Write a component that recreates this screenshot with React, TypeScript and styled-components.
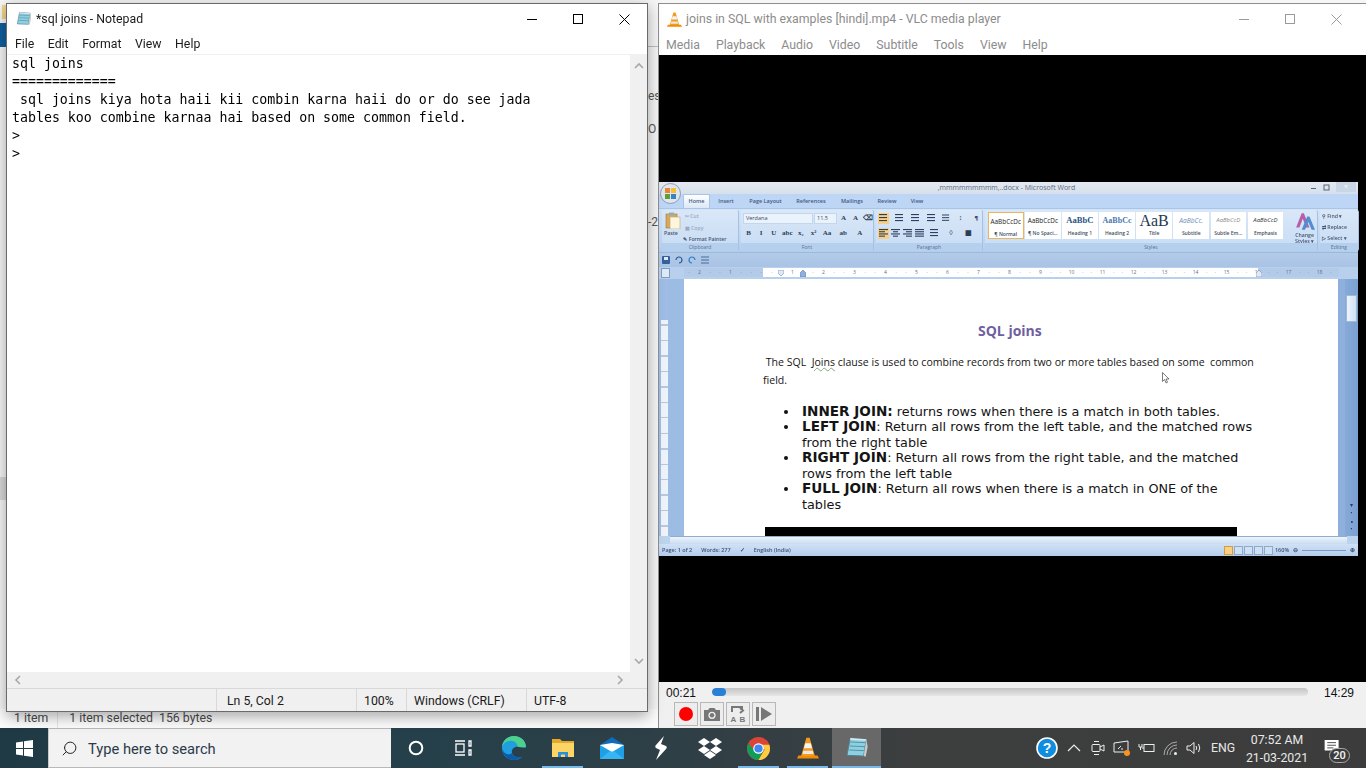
import React from 'react'
import styled, { createGlobalStyle, css } from 'styled-components'
import { Search } from 'lucide-react'

const Global = createGlobalStyle`
  html, body { margin: 0; padding: 0; overflow: hidden; background: #fff; }
  * { box-sizing: border-box; }
`

const UI = `Roboto, "Open Sans", sans-serif`

const Desktop = styled.div`
  width: 1366px;
  height: 768px;
  display: flex;
  flex-direction: column;
  font-family: ${UI};
  overflow: hidden;
`
const Workspace = styled.div`
  position: relative;
  flex: 1;
  background: #f6f6f6;
`
const Scrap = styled.div<{ $x: number; $y: number; $w: number; $h: number; $bg: string }>`
  position: absolute;
  left: ${p => p.$x}px;
  top: ${p => p.$y}px;
  width: ${p => p.$w}px;
  height: ${p => p.$h}px;
  background: ${p => p.$bg};
  font-size: 12px;
  color: #555;
  line-height: ${p => p.$h}px;
  white-space: nowrap;
`
const ExplorerStatus = styled.div`
  position: absolute;
  left: 0;
  top: 709px;
  width: 658px;
  height: 19px;
  padding: 1px 0 0 14px;
  background: #fbfbfb;
  display: flex;
  gap: 9px;
  font-size: 12.3px;
  line-height: 16px;
  color: #4a4a4a;
  span + span { border-left: 1px solid #e4e4e4; padding-left: 11px; }
`
const Win = styled.div<{ $x: number; $y: number; $w: number; $h: number }>`
  position: absolute;
  left: ${p => p.$x}px;
  top: ${p => p.$y}px;
  width: ${p => p.$w}px;
  height: ${p => p.$h}px;
  display: flex;
  flex-direction: column;
  background: #fff;
`
const NotepadWin = styled(Win)`
  border: 1px solid #6a6a6a;
  box-shadow: 0 4px 14px rgba(0, 0, 0, 0.35);
`
const VlcWin = styled(Win)`
  border-left: 1px solid #8f8f8f;
  border-top: 1px solid #8f8f8f;
`
const TitleBar = styled.div<{ $dim?: boolean; $pad: number; $right: number }>`
  height: 30px;
  flex: none;
  display: flex;
  align-items: center;
  padding: 0 ${p => p.$right}px 0 ${p => p.$pad}px;
  gap: 4px;
  font-size: 12.3px;
  color: ${p => (p.$dim ? '#8c8c8c' : '#1a1a1a')};
  white-space: nowrap;
`
const Grow = styled.div`
  flex: 1;
`
const CaptionGroup = styled.div`
  display: flex;
  flex: none;
`
const CaptionBtn = styled.div`
  width: 46px;
  height: 28px;
  display: flex;
  align-items: center;
  justify-content: center;
`
const MenuBar = styled.div<{ $dim?: boolean; $gap: number; $top: number; $pad: number }>`
  height: 20px;
  margin-top: ${p => p.$top}px;
  flex: none;
  display: flex;
  align-items: center;
  gap: ${p => p.$gap}px;
  padding-left: ${p => p.$pad}px;
  font-size: 12.3px;
  color: ${p => (p.$dim ? '#8c8c8c' : '#1a1a1a')};
`
const EditRow = styled.div`
  flex: 1;
  display: flex;
  min-height: 0;
  border-top: 1px solid #f0f0f0;
`
const EditText = styled.pre`
  flex: 1;
  margin: 0;
  padding: 0 0 0 5px;
  font-family: "DejaVu Sans Mono", "Liberation Mono", monospace;
  font-size: 13.25px;
  line-height: 18px;
  color: #000;
`
const VScroll = styled.div`
  width: 17px;
  flex: none;
  background: #f0f0f0;
  display: flex;
  flex-direction: column;
  justify-content: space-between;
  align-items: center;
  padding: 6px 0;
`
const HScroll = styled.div`
  height: 16px;
  flex: none;
  background: #f0f0f0;
  display: flex;
  justify-content: space-between;
  align-items: center;
  padding: 0 22px 0 6px;
`
const StatusBar = styled.div`
  height: 23px;
  flex: none;
  display: flex;
  background: #f0f0f0;
  border-top: 1px solid #d9d9d9;
  font-size: 12.3px;
  color: #1a1a1a;
`
const StatusCell = styled.div<{ $w?: number; $pad?: number; $last?: boolean }>`
  ${p => (p.$w ? css`width: ${p.$w}px;` : css`flex: 1;`)}
  flex-shrink: 0;
  padding-left: ${p => p.$pad ?? 7}px;
  line-height: 25px;
  border-right: ${p => (p.$last ? 'none' : '1px solid #d9d9d9')};
  white-space: nowrap;
`
const Video = styled.div`
  flex: none;
  height: 627px;
  background: #000;
  padding-top: 127px;
`
const Controls = styled.div`
  flex: 1;
  background: #f0f0f0;
  padding-left: 7px;
  display: flex;
  flex-direction: column;
`
const SeekRow = styled.div`
  height: 19px;
  margin-bottom: 1px;
  display: flex;
  align-items: center;
  font-family: "Liberation Sans", sans-serif;
  font-size: 12px;
  color: #111;
`
const SeekTime = styled.div<{ $w?: number }>`
  width: ${p => p.$w ?? 46}px;
  flex: none;
  padding-top: 2px;
`
const Seek = styled.div`
  width: 596px;
  height: 8px;
  margin-right: 16px;
  flex: none;
  border-radius: 4px;
  background: linear-gradient(#c4c4c4, #e6e6e6);
  overflow: hidden;
`
const SeekFill = styled.div<{ $w: number }>`
  width: ${p => p.$w}px;
  height: 100%;
  border-radius: 4px;
  background: #2a7fd6;
`
const ButtonRow = styled.div`
  display: flex;
  gap: 2px;
  margin-left: 8px;
`
const CtlBtn = styled.div`
  width: 24px;
  height: 24px;
  border: 1px solid #b8b8b8;
  display: flex;
  align-items: center;
  justify-content: center;
  background: #ededed;
`

/* word screen-recording inside the video */
const Word = styled.div`
  width: 699px;
  height: 374px;
  display: flex;
  flex-direction: column;
  background: #bcd3ee;
  filter: blur(0.35px);
  position: relative;
  font-family: "Open Sans", sans-serif;
  color: #3a4f6c;
`
const WordTitle = styled.div`
  height: 12px;
  flex: none;
  background: linear-gradient(#e4e9f0, #d6e0ec);
  font-size: 7px;
  line-height: 12px;
  color: #5d6b80;
  text-align: center;
  padding-right: 4px;
  position: relative;
`
const WordCaption = styled.div`
  position: absolute;
  right: 2px;
  top: 0;
  height: 10px;
  display: flex;
  align-items: center;
  gap: 6px;
`
const WordClose = styled.div`
  width: 20px;
  height: 10px;
  background: #c9d6e6;
  color: #fff;
  font-size: 7px;
  line-height: 10px;
  text-align: center;
`
const Orb = styled.div`
  position: absolute;
  left: 1px;
  top: 1px;
  z-index: 2;
`
const TabRow = styled.div`
  height: 14px;
  flex: none;
  display: flex;
  padding-left: 24px;
  font-size: 5.5px;
  font-weight: 600;
  line-height: 14px;
  background: #bdd6f5;
  color: #3f5a80;
  white-space: nowrap;
`
const WTab = styled.div<{ $w: number; $on?: boolean }>`
  width: ${p => p.$w}px;
  text-align: center;
  ${p => p.$on && css`
    background: linear-gradient(#fff, #dbe8f8);
    border: 1px solid #a8c3e3;
    border-bottom: none;
    border-radius: 2px 2px 0 0;
    line-height: 12px;
  `}
`
const Ribbon = styled.div`
  height: 44px;
  flex: none;
  display: flex;
  gap: 2px;
  padding: 1px 1px 1px 3px;
  background: linear-gradient(#d4e4f7, #bfd7f3 70%, #b2cdee);
  border-top: 1px solid #a9c5e6;
`
const Group = styled.div<{ $w: number }>`
  width: ${p => p.$w}px;
  flex: none;
  display: flex;
  flex-direction: column;
  border-right: 1px solid #a5c0e0;
  border-radius: 2px;
  background: linear-gradient(#d9e7f8, #c8dcf4);
`
const GroupBody = styled.div`
  flex: 1;
  display: flex;
  min-height: 0;
  padding: 2px 2px 0;
`
const GroupLabel = styled.div`
  height: 8px;
  flex: none;
  background: #b5cfee;
  font-size: 5px;
  line-height: 8px;
  text-align: center;
  color: #55708f;
`
const ToolCol = styled.div<{ $gap?: number }>`
  display: flex;
  flex-direction: column;
  gap: ${p => p.$gap ?? 3}px;
`
const ToolRow = styled.div<{ $gap?: number }>`
  display: flex;
  align-items: center;
  height: 12px;
  gap: ${p => p.$gap ?? 2}px;
`
const Mini = styled.div`
  font-size: 5.2px;
  font-weight: 600;
  line-height: 8px;
  white-space: nowrap;
  color: #45556e;
`
const MiniDim = styled(Mini)`
  color: #9aa9bc;
`
const Combo = styled.div<{ $w: number }>`
  width: ${p => p.$w}px;
  height: 11px;
  background: #eaf2fc;
  border: 1px solid #c2d6ee;
  font-size: 5.5px;
  line-height: 9px;
  padding-left: 2px;
  color: #3a4a60;
`
const Glyph = styled.div<{ $w?: number; $on?: boolean }>`
  width: ${p => p.$w ?? 11}px;
  height: 11px;
  flex: none;
  text-align: center;
  font-family: "Liberation Serif", serif;
  font-size: 7px;
  font-weight: 700;
  line-height: 11px;
  color: #2d3c55;
  background: ${p => (p.$on ? '#f8cf84' : 'transparent')};
  display: flex;
  align-items: center;
  justify-content: center;
`
const StyleStrip = styled.div`
  display: flex;
  gap: 1.6px;
  padding-left: 1px;
`
const StyleTile = styled.div<{ $on?: boolean }>`
  width: 35.5px;
  height: 27px;
  background: #fff;
  flex: none;
  text-align: center;
  overflow: hidden;
  ${p => p.$on && css`border: 1px solid #eeb45a;`}
`
const Preview = styled.div<{ $c: string; $f?: string; $s: number; $b?: boolean; $i?: boolean }>`
  height: 17px;
  line-height: 17px;
  font-size: ${p => p.$s}px;
  color: ${p => p.$c};
  font-family: ${p => p.$f ?? '"Open Sans", sans-serif'};
  font-weight: ${p => (p.$b ? 700 : 400)};
  font-style: ${p => (p.$i ? 'italic' : 'normal')};
  white-space: nowrap;
`
const TileName = styled.div`
  font-size: 5px;
  font-weight: 600;
  line-height: 8px;
  color: #3e4d62;
  white-space: nowrap;
`
const ChangeStyles = styled.div`
  margin-left: 11px;
  width: 24px;
  text-align: center;
  font-size: 5.2px;
  line-height: 6px;
  font-weight: 600;
  color: #45556e;
`
const Qat = styled.div`
  height: 15px;
  flex: none;
  display: flex;
  align-items: center;
  gap: 5px;
  padding-left: 3px;
  background: linear-gradient(#b3cbe9, #a9c3e5);
  border-top: 1px solid #9db8da;
`
const RulerRow = styled.div`
  height: 12px;
  flex: none;
  display: flex;
  background: #b8d0ee;
`
const RulerCorner = styled.div`
  width: 9px;
  height: 10px;
  margin: 1px 0 0 2px;
  background: #dfe9f6;
  border: 1px solid #7d9cc4;
  flex: none;
`
const Ruler = styled.div`
  margin-left: 14px;
  width: 655px;
  height: 9px;
  margin-top: 1px;
  display: flex;
  position: relative;
  background: linear-gradient(90deg, #b3cbe9 0 79px, #fff 79px 574px, #b3cbe9 574px);
`
const RulerCell = styled.div`
  width: 31px;
  flex: none;
  display: flex;
  justify-content: space-around;
  font-size: 5px;
  line-height: 9px;
  color: #5a6f8d;
`
const RulerMark = styled.svg<{ $x: number }>`
  position: absolute;
  left: ${p => p.$x}px;
  top: 2px;
`
const DocArea = styled.div`
  flex: 1;
  display: flex;
  min-height: 0;
  background: linear-gradient(90deg, #9cbce4, #8fb0dc);
`
const VRuler = styled.div`
  width: 7px;
  margin-left: 2px;
  flex: none;
  background:
    linear-gradient(#9fbde4 0 41px, transparent 41px),
    repeating-linear-gradient(#eef3fa 0 14px, #b9c7da 14px 15.5px);
`
const Page = styled.div`
  margin-left: 16px;
  width: 654px;
  flex: none;
  background: #fff;
  overflow: hidden;
  padding-top: 42px;
  color: #111;
  position: relative;
  font-family: "DejaVu Sans", Verdana, sans-serif;
`
const DocTitle = styled.div`
  margin-left: 294px;
  font-family: "Open Sans", sans-serif;
  font-weight: 700;
  font-size: 14px;
  line-height: 20px;
  color: #6f5f9f;
  white-space: nowrap;
`
const DocPara = styled.div`
  margin: 12px 0 0 79px;
  font-family: "Open Sans", sans-serif;
  font-size: 10.55px;
  line-height: 18px;
  white-space: pre;
  color: #151515;
  u { text-decoration: underline wavy #7fa87f 1px; }
`
const DocList = styled.ul`
  margin: 15px 0 0 118px;
  padding: 0;
  list-style: none;
  font-size: 12.8px;
  line-height: 15.45px;
  white-space: nowrap;
  color: #141414;
  b { font-size: 13.6px; }
  li { position: relative; }
  li::before {
    content: '';
    position: absolute;
    left: -18px;
    top: 6px;
    width: 4px;
    height: 4px;
    border-radius: 50%;
    background: #111;
  }
`
const BlackBar = styled.div`
  margin: 15px 0 0 81px;
  width: 472px;
  height: 12px;
  background: #000;
`
const WordV = styled.div`
  margin-left: 7px;
  flex: 1;
  background: linear-gradient(90deg, #86a9d8, #7ba0d2);
  display: flex;
  flex-direction: column;
`
const WordThumb = styled.div`
  height: 27px;
  margin: 16px 1px 0;
  background: linear-gradient(90deg, #eef4fc, #cfe0f4);
  border: 1px solid #9eb8d8;
`
const WordArrows = styled.div`
  margin-top: auto;
  padding-bottom: 3px;
  font-size: 6px;
  line-height: 8px;
  text-align: center;
  color: #27405f;
`
const WordH = styled.div`
  height: 8px;
  flex: none;
  margin: 0 11px;
  background: linear-gradient(#eef4fb, #c9dbf1);
  border-top: 1px solid #8fadd3;
`
const WordStatus = styled.div`
  height: 12px;
  flex: none;
  display: flex;
  align-items: center;
  gap: 9px;
  padding: 0 3px;
  font-size: 5.5px;
  font-weight: 600;
  color: #3c5273;
  background: linear-gradient(#d0e1f6, #b4cdec);
  white-space: nowrap;
`
const ViewBtns = styled.div`
  margin-left: auto;
  display: flex;
  align-items: center;
  gap: 1px;
`
const ViewBtn = styled.div<{ $on?: boolean }>`
  width: 9px;
  height: 9px;
  border: 1px solid ${p => (p.$on ? '#d99a3c' : '#8fa9c9')};
  background: ${p => (p.$on ? '#f8cf84' : '#cfe0f4')};
`
const Zoom = styled.div`
  width: 44px;
  height: 1px;
  margin: 0 3px;
  background: #7f9ac0;
`
const Pointer = styled.svg`
  position: absolute;
  left: 478px;
  top: 93px;
`

/* taskbar */
const Taskbar = styled.div`
  height: 40px;
  flex: none;
  display: flex;
  align-items: stretch;
  background: linear-gradient(90deg, #1f3a45 0, #25404b 30%, #2f3f46 50%, #3d3e3e 68%, #3c3c3c 100%);
`
const TaskBtn = styled.div<{ $w: number; $on?: boolean; $bar?: boolean }>`
  width: ${p => p.$w}px;
  flex: none;
  display: flex;
  align-items: center;
  justify-content: center;
  position: relative;
  background: ${p => (p.$on ? '#686868' : 'transparent')};
  ${p => p.$bar && css`
    &::after {
      content: '';
      position: absolute;
      left: 4px;
      right: 4px;
      bottom: 0;
      height: 2px;
      background: #76b9ed;
    }
  `}
  ${p => p.$on && css`
    &::after { left: 0; right: 0; }
  `}
`
const TaskGap = styled.div`
  width: 3px;
  flex: none;
`
const SearchBox = styled.div`
  width: 343px;
  flex: none;
  display: flex;
  align-items: center;
  background: #f2f2f2;
  border-top: 1px solid #b8b8b8;
  border-bottom: 1px solid #b8b8b8;
  border-left: 1px solid #c8c8c8;
  padding: 1px 0 0 12px;
  gap: 10px;
  font-size: 14.7px;
  color: #2a3a4a;
`
const SearchGlass = styled(Search)`
  transform: scaleX(-1);
`
const Tray = styled.div`
  flex: 1;
  display: flex;
  align-items: center;
  color: #fff;
`
const TrayIcon = styled.div<{ $w: number }>`
  width: ${p => p.$w}px;
  flex: none;
  display: flex;
  justify-content: center;
`
const Lang = styled.div`
  width: 34px;
  text-align: center;
  font-size: 12.3px;
  color: #e8e8e8;
  margin-left: 3px;
`
const Clock = styled.div`
  width: 68px;
  margin-left: 3px;
  padding-top: 2px;
  text-align: center;
  font-size: 12.3px;
  line-height: 18px;
  color: #e8e8e8;
  white-space: nowrap;
`
const Notif = styled.div`
  margin: 6px 0 0 13px;
  position: relative;
  width: 26px;
  height: 24px;
`
const NotifCount = styled.div`
  position: absolute;
  right: 0;
  bottom: 0;
  width: 21px;
  height: 15px;
  border-radius: 8px;
  background: #3c3c3c;
  border: 1px solid #aaa;
  text-align: center;
  font-size: 11px;
  font-weight: 600;
  line-height: 13px;
  color: #eee;
`

const NotepadIcon = ({ s = 16 }: { s?: number }) => (
  <svg width={s} height={s} viewBox="0 0 18 18">
    <path d="M4 1.5 16 2.5 14 15 1.5 14.5z" fill="#8fd0e0" stroke="#4f7f94" strokeWidth=".7" />
    <path d="M4 4.5 15.500 5M3.600 7.500 15 8M3.200 10.500 14.600 11" stroke="#4e8fa8" strokeWidth=".7" />
    <path d="M4 1.500 16 2.500 15.800 3.600 3.800 2.800z" fill="#dfe7ea" />
    <path d="M14 15 16 2.500 17 8 15.500 15.500z" fill="#c9ccc8" />
  </svg>
)

const VlcCone = ({ s = 15 }: { s?: number }) => (
  <svg width={s} height={s} viewBox="0 0 16 16">
    <path d="M1 13.500h14l1 2.200H0z" fill="#f28c00" />
    <path d="M6.800 0.500h2.400L13 13.800H3z" fill="#f59a1a" />
    <path d="M6 4.500h4l1 3.600H5z" fill="#f4f4f4" />
    <path d="M4.600 10h6.800l.6 2.400H4z" fill="#e8e8e8" />
  </svg>
)

const Chev = ({ dir }: { dir: 'u' | 'd' | 'l' | 'r' }) => {
  const d = { u: 'M1 7 5 3 9 7', d: 'M1 3 5 7 9 3', l: 'M7 1 3 5 7 9', r: 'M3 1 7 5 3 9' }[dir]
  return (
    <svg width="10" height="10" viewBox="0 0 10 10">
      <path d={d} fill="none" stroke="#a8a8a8" strokeWidth="1.6" />
    </svg>
  )
}

const Caption = ({ c }: { c: string }) => (
  <CaptionGroup>
    <CaptionBtn>
      <svg width="10" height="10"><path d="M0 5.500h10" stroke={c} /></svg>
    </CaptionBtn>
    <CaptionBtn>
      <svg width="10" height="10"><rect x=".5" y=".5" width="9" height="9" fill="none" stroke={c} /></svg>
    </CaptionBtn>
    <CaptionBtn>
      <svg width="11" height="11"><path d="M.5.500l10 10M10.500.500l-10 10" stroke={c} /></svg>
    </CaptionBtn>
  </CaptionGroup>
)

const Lines = ({ kind }: { kind: 'list' | 'left' | 'center' | 'right' | 'just' }) => {
  const rows = { list: [8, 8, 8], left: [9, 6, 9, 6], center: [9, 5, 9, 5], right: [9, 6, 9, 6], just: [9, 9, 9, 9] }[kind]
  return (
    <svg width="9" height="9" viewBox="0 0 9 9">
      {rows.map((w, i) => {
        const x = kind === 'center' ? (9 - w) / 2 : kind === 'right' ? 9 - w : 0
        return <rect key={i} x={x} y={i * (kind === 'list' ? 3 : 2.2)} width={w} height="1.1" fill="#2d3f5e" />
      })}
    </svg>
  )
}

const styleTiles = [
  { name: '¶ Normal', text: 'AaBbCcDc', c: '#222', s: 6.4, on: true },
  { name: '¶ No Spaci...', text: 'AaBbCcDc', c: '#222', s: 6.4 },
  { name: 'Heading 1', text: 'AaBbC', c: '#2b5286', s: 8.6, b: true, f: '"Liberation Serif", serif' },
  { name: 'Heading 2', text: 'AaBbCc', c: '#4a78b0', s: 8, b: true, f: '"Liberation Serif", serif' },
  { name: 'Title', text: 'AaB', c: '#26364e', s: 16, f: '"Liberation Serif", serif' },
  { name: 'Subtitle', text: 'AaBbCc.', c: '#6a8fbb', s: 6.6, i: true },
  { name: 'Subtle Em...', text: 'AaBbCcD', c: '#8a8a8a', s: 6, i: true },
  { name: 'Emphasis', text: 'AaBbCcD', c: '#333', s: 6, i: true },
]

const rulerNums = ['2', '1', '', '1', '2', '3', '4', '5', '6', '7', '8', '9', '10', '11', '12', '13', '14', '15', '16', '17', '18']

const Notepad = () => (
  <NotepadWin $x={6} $y={3} $w={642} $h={709}>
    <TitleBar $pad={9} $right={0}>
      <NotepadIcon />
      <span>*sql joins - Notepad</span>
      <Grow />
      <Caption c="#000" />
    </TitleBar>
    <MenuBar $gap={13.5} $top={0} $pad={8}>
      <span>File</span>
      <span>Edit</span>
      <span>Format</span>
      <span>View</span>
      <span>Help</span>
    </MenuBar>
    <EditRow>
      <EditText>{`sql joins
=============
 sql joins kiya hota haii kii combin karna haii do or do see jada
tables koo combine karnaa hai based on some common field.
>
>`}</EditText>
      <VScroll>
        <Chev dir="u" />
        <Chev dir="d" />
      </VScroll>
    </EditRow>
    <HScroll>
      <Chev dir="l" />
      <Chev dir="r" />
    </HScroll>
    <StatusBar>
      <StatusCell $w={210} />
      <StatusCell $w={140} $pad={10}>Ln 5, Col 2</StatusCell>
      <StatusCell $w={50}>100%</StatusCell>
      <StatusCell $w={120}>Windows (CRLF)</StatusCell>
      <StatusCell $last>UTF-8</StatusCell>
    </StatusBar>
  </NotepadWin>
)

const WordWindow = () => (
  <Word>
    <Orb>
      <svg width="21" height="21" viewBox="0 0 21 21">
        <circle cx="10.500" cy="10.500" r="10" fill="#dfe6ee" stroke="#8d9bb0" />
        <rect x="5" y="5" width="5" height="5" fill="#e8833a" />
        <rect x="11" y="5" width="5" height="5" fill="#f2c230" />
        <rect x="5" y="11" width="5" height="5" fill="#5aa03c" />
        <rect x="11" y="11" width="5" height="5" fill="#3f7fc4" />
      </svg>
    </Orb>
    <WordTitle>
      ,mmmmmmmmm,..docx - Microsoft Word
      <WordCaption>
        <svg width="6" height="6"><path d="M0 4.500h5" stroke="#55657a" /></svg>
        <svg width="7" height="7"><rect x="1" y="1" width="5" height="5" fill="none" stroke="#55657a" /></svg>
        <WordClose>×</WordClose>
      </WordCaption>
    </WordTitle>
    <TabRow>
      <WTab $w={27} $on>Home</WTab>
      <WTab $w={32}>Insert</WTab>
      <WTab $w={47}>Page Layout</WTab>
      <WTab $w={44}>References</WTab>
      <WTab $w={38}>Mailings</WTab>
      <WTab $w={32}>Review</WTab>
      <WTab $w={28}>View</WTab>
    </TabRow>
    <Ribbon>
      <Group $w={77}>
        <GroupBody>
          <ToolCol $gap={0}>
            <svg width="18" height="17" viewBox="0 0 18 17">
              <rect x="2" y="2" width="11" height="14" fill="#d9a95b" stroke="#9a7a3f" strokeWidth=".6" />
              <rect x="6" y="5" width="10" height="12" fill="#fdf6dc" stroke="#b5a878" strokeWidth=".6" />
              <rect x="5" y="0.500" width="5" height="3" fill="#9aa8b8" />
            </svg>
            <Mini>Paste</Mini>
          </ToolCol>
          <ToolCol $gap={3.5}>
            <MiniDim>&nbsp;&nbsp;✂ Cut</MiniDim>
            <MiniDim>&nbsp;&nbsp;▣ Copy</MiniDim>
            <Mini>&nbsp;✎ Format Painter</Mini>
          </ToolCol>
        </GroupBody>
        <GroupLabel>Clipboard</GroupLabel>
      </Group>
      <Group $w={133}>
        <GroupBody>
          <ToolCol>
            <ToolRow $gap={1}>
              <Combo $w={70}>Verdana</Combo>
              <Combo $w={23}>11.5</Combo>
              <Glyph $w={11}>A</Glyph>
              <Glyph $w={11}>A</Glyph>
              <Glyph $w={11}>⌫</Glyph>
            </ToolRow>
            <ToolRow $gap={1.6}>
              <Glyph>B</Glyph>
              <Glyph>I</Glyph>
              <Glyph>U</Glyph>
              <Glyph $w={13}>abc</Glyph>
              <Glyph>x₂</Glyph>
              <Glyph>x²</Glyph>
              <Glyph $w={13}>Aa</Glyph>
              <Glyph $w={16}>ab</Glyph>
              <Glyph $w={14}>A</Glyph>
            </ToolRow>
          </ToolCol>
        </GroupBody>
        <GroupLabel>Font</GroupLabel>
      </Group>
      <Group $w={107}>
        <GroupBody>
          <ToolCol>
            <ToolRow $gap={5}>
              <Glyph $on><Lines kind="list" /></Glyph>
              <Glyph><Lines kind="list" /></Glyph>
              <Glyph><Lines kind="list" /></Glyph>
              <Glyph><Lines kind="list" /></Glyph>
              <Glyph $w={8}><Lines kind="list" /></Glyph>
              <Glyph>↕</Glyph>
              <Glyph>¶</Glyph>
            </ToolRow>
            <ToolRow $gap={1}>
              <Glyph $on><Lines kind="left" /></Glyph>
              <Glyph><Lines kind="center" /></Glyph>
              <Glyph><Lines kind="right" /></Glyph>
              <Glyph><Lines kind="just" /></Glyph>
              <Glyph $w={16}><Lines kind="list" /></Glyph>
              <Glyph $w={16}>◊</Glyph>
              <Glyph $w={16}>▦</Glyph>
            </ToolRow>
          </ToolCol>
        </GroupBody>
        <GroupLabel>Paragraph</GroupLabel>
      </Group>
      <Group $w={333}>
        <GroupBody>
          <StyleStrip>
            {styleTiles.map(t => (
              <StyleTile key={t.name} $on={t.on}>
                <Preview $c={t.c} $s={t.s} $b={t.b} $i={t.i} $f={t.f}>{t.text}</Preview>
                <TileName>{t.name}</TileName>
              </StyleTile>
            ))}
          </StyleStrip>
          <ChangeStyles>
            <svg width="20" height="19" viewBox="0 0 18 17">
              <path d="M1 14 6 1h2l5 13h-3L7 6l-3 8z" fill="#b65fa8" />
              <path d="M6 16 11 4h2l5 12h-3l-3-7-3 7z" fill="#4f8fcf" />
            </svg>
            <div>Change</div>
            <div>Styles ▾</div>
          </ChangeStyles>
        </GroupBody>
        <GroupLabel>Styles</GroupLabel>
      </Group>
      <Group $w={39}>
        <GroupBody>
          <ToolCol $gap={3}>
            <Mini>⚲ Find ▾</Mini>
            <Mini>⇄ Replace</Mini>
            <Mini>▷ Select ▾</Mini>
          </ToolCol>
        </GroupBody>
        <GroupLabel>Editing</GroupLabel>
      </Group>
    </Ribbon>
    <Qat>
      <svg width="8" height="8"><rect width="8" height="8" rx="1" fill="#35609c" /><rect x="2" y="1" width="4" height="3" fill="#dfe9f6" /></svg>
      <svg width="8" height="8" viewBox="0 0 8 8"><path d="M1 4a3 3 0 1 1 3 3" fill="none" stroke="#2d5b98" strokeWidth="1.2" /></svg>
      <svg width="8" height="8" viewBox="0 0 8 8"><path d="M7 4a3 3 0 1 0-3 3" fill="none" stroke="#2d7bc4" strokeWidth="1.2" /></svg>
      <svg width="8" height="8"><path d="M0 1h8M0 4h8M0 7h8" stroke="#496a96" /></svg>
    </Qat>
    <RulerRow>
      <RulerCorner />
      <Ruler>
        {rulerNums.map((n, i) => (
          <RulerCell key={i}>
            <span>·</span>
            <span>{n || '·'}</span>
            <span>·</span>
          </RulerCell>
        ))}
        <RulerMark $x={94} width="6" height="7" viewBox="0 0 6 7"><path d="M0 0h6v3L3 6 0 3z" fill="#dfe9f6" stroke="#6f8db5" strokeWidth=".6" /></RulerMark>
        <RulerMark $x={116} width="6" height="7" viewBox="0 0 6 7"><path d="M3 0 6 3v4H0V3z" fill="#8fb0dc" stroke="#5f7fa8" strokeWidth=".6" /></RulerMark>
        <RulerMark $x={572} width="6" height="7" viewBox="0 0 6 7"><path d="M3 0 6 3v4H0V3z" fill="#dfe9f6" stroke="#6f8db5" strokeWidth=".6" /></RulerMark>
      </Ruler>
    </RulerRow>
    <DocArea>
      <VRuler />
      <Page>
        <DocTitle>SQL joins</DocTitle>
        <DocPara>
          <div> The SQL  <u>Joins</u> clause is used to combine records from two or more tables based on some  common</div>
          <div>field.</div>
        </DocPara>
        <DocList>
          <li><b>INNER JOIN:</b> returns rows when there is a match in both tables.</li>
          <li><b>LEFT JOIN</b>: Return all rows from the left table, and the matched rows<br />from the right table</li>
          <li><b>RIGHT JOIN</b>: Return all rows from the right table, and the matched<br />rows from the left table</li>
          <li><b>FULL JOIN</b>: Return all rows when there is a match in ONE of the<br />tables</li>
        </DocList>
        <BlackBar />
        <Pointer width="8" height="12" viewBox="0 0 8 12">
          <path d="M.5.500v9l2-2 1.600 3.500 1.400-.7L4 7h3z" fill="#fff" stroke="#444" strokeWidth=".7" />
        </Pointer>
      </Page>
      <WordV>
        <WordThumb />
        <WordArrows>▾<br />•<br />∘<br />•</WordArrows>
      </WordV>
    </DocArea>
    <WordH />
    <WordStatus>
      <span>Page: 1 of 2</span>
      <span>Words: 277</span>
      <span>✓</span>
      <span>English (India)</span>
      <ViewBtns>
        <ViewBtn $on />
        <ViewBtn />
        <ViewBtn />
        <ViewBtn />
        <ViewBtn />
        <span>&nbsp;160%&nbsp;&nbsp;</span>
        <span>⊖</span>
        <Zoom />
        <span>⊕</span>
      </ViewBtns>
    </WordStatus>
  </Word>
)

const Vlc = () => (
  <VlcWin $x={658} $y={3} $w={708} $h={725}>
    <TitleBar $dim $pad={8} $right={7}>
      <VlcCone />
      <span>joins in SQL with examples [hindi].mp4 - VLC media player</span>
      <Grow />
      <Caption c="#9a9a9a" />
    </TitleBar>
    <MenuBar $dim $gap={16} $top={1} $pad={7}>
      <span>Media</span>
      <span>Playback</span>
      <span>Audio</span>
      <span>Video</span>
      <span>Subtitle</span>
      <span>Tools</span>
      <span>View</span>
      <span>Help</span>
    </MenuBar>
    <Video>
      <WordWindow />
    </Video>
    <Controls>
      <SeekRow>
        <SeekTime>00:21</SeekTime>
        <Seek><SeekFill $w={14} /></Seek>
        <SeekTime $w={30}>14:29</SeekTime>
      </SeekRow>
      <ButtonRow>
        <CtlBtn><svg width="16" height="16"><circle cx="8" cy="8" r="7" fill="#f00" /></svg></CtlBtn>
        <CtlBtn>
          <svg width="18" height="15" viewBox="0 0 18 15">
            <path d="M1 3h4l1.500-2h5L13 3h4v11H1z" fill="#777" />
            <circle cx="9" cy="8.300" r="3.600" fill="#ededed" />
            <circle cx="9" cy="8.300" r="2.200" fill="#777" />
          </svg>
        </CtlBtn>
        <CtlBtn>
          <svg width="18" height="18" viewBox="0 0 18 18">
            <path d="M3 7V2h10v3M11 3l3 2.500L11 8" fill="none" stroke="#777" strokeWidth="2" />
            <text x="1.500" y="17" fontFamily="Liberation Sans, sans-serif" fontSize="8" fontWeight="700" fill="#777">A</text>
            <text x="10.500" y="17" fontFamily="Liberation Sans, sans-serif" fontSize="8" fontWeight="700" fill="#777">B</text>
          </svg>
        </CtlBtn>
        <CtlBtn>
          <svg width="18" height="16" viewBox="0 0 18 16">
            <rect x="1" y="1" width="3" height="14" fill="#777" />
            <path d="M6 1 17 8 6 15z" fill="#777" />
          </svg>
        </CtlBtn>
      </ButtonRow>
    </Controls>
  </VlcWin>
)

export default function App() {
  return (
    <Desktop>
      <Global />
      <Workspace>
        <Scrap $x={2} $y={5} $w={4} $h={14} $bg="#f2d78a" />
        <Scrap $x={0} $y={23} $w={6} $h={24} $bg="#0f5f9e" />
        <Scrap $x={0} $y={477} $w={6} $h={23} $bg="#d8d8d8" />
        <Scrap $x={648} $y={46} $w={10} $h={1} $bg="#bdbdbd" />
        <Scrap $x={648} $y={88} $w={10} $h={16} $bg="transparent">es</Scrap>
        <Scrap $x={648} $y={121} $w={10} $h={16} $bg="transparent">O</Scrap>
        <Scrap $x={648} $y={214} $w={10} $h={16} $bg="transparent">-2</Scrap>
        <ExplorerStatus>
          <span>1 item</span>
          <span>1 item selected&nbsp;&nbsp;156 bytes</span>
        </ExplorerStatus>
        <Vlc />
        <Notepad />
      </Workspace>
      <Taskbar>
        <TaskBtn $w={48}>
          <svg width="17" height="17" viewBox="0 0 17 17" fill="#fff">
            <path d="M0 2.400 7 1.400v6.600H0zM8 1.200 17 0v8H8zM0 9h7v6.600l-7-1zM8 9h9v8l-9-1.200z" />
          </svg>
        </TaskBtn>
        <SearchBox>
          <SearchGlass size={17} color="#222" strokeWidth={1.4} />
          <span>Type here to search</span>
        </SearchBox>
        <TaskBtn $w={49}>
          <svg width="16" height="16"><circle cx="8" cy="8" r="6.300" fill="none" stroke="#fff" strokeWidth="2" /></svg>
        </TaskBtn>
        <TaskBtn $w={46}>
          <svg width="18" height="16" viewBox="0 0 18 16" fill="none" stroke="#fff" strokeWidth="1.300">
            <path d="M1 1h10M1 15h10" />
            <rect x="2" y="4" width="8" height="8" />
            <path d="M15 1h2v5h-2zM15 10h2v5h-2z" />
          </svg>
        </TaskBtn>
        <TaskGap />
        <TaskBtn $w={49}>
          <svg width="24" height="24" viewBox="0 0 24 24">
            <path d="M12 0C5 0 0 5 0 12c0 7 5 12 12 12 3.500 0 6-1 8-3-4 1-9 0-10-4s3-7 7-6c2 .5 4 1 7 .5C24 5 19 0 12 0z" fill="#1f9ee0" />
            <path d="M0 12C1 6 8 3 13 6c3 2 2 5 4 5s7 0 7 0c0-6-5-11-12-11C5 0 0 5 0 12z" fill="#4cd08a" />
            <path d="M10 17c1 4 6 5 10 4-2 2-4.500 3-8 3-6 0-11-4-12-11 2 5 7 7 10 4z" fill="#0c5aa8" />
          </svg>
        </TaskBtn>
        <TaskBtn $w={49} $bar>
          <svg width="22" height="20" viewBox="0 0 22 20">
            <path d="M0 1h8l2 2h12v15H0z" fill="#e5a929" />
            <path d="M0 5h22v14H0z" fill="#fbd666" />
            <path d="M6 14h10v5h-3v-2.500H9V19H6z" fill="#2a8fdc" />
          </svg>
        </TaskBtn>
        <TaskBtn $w={49}>
          <svg width="24" height="22" viewBox="0 0 24 22">
            <path d="M0 8 12 0l12 8v14H0z" fill="#0f6cbd" />
            <path d="M0 8h24v14H0z" fill="#1fa0e6" />
            <path d="M0 8 12 15 24 8 12 6z" fill="#fff" />
            <path d="M0 22 10 14l2 1 2-1 10 8z" fill="#37b5f3" />
          </svg>
        </TaskBtn>
        <TaskBtn $w={49}>
          <svg width="14" height="24" viewBox="0 0 14 24" fill="#fff">
            <path d="M10 0 2 9c-1 1-1 2 0 3l4 2-4 10 10-11c1-1 1-2 0-3L7 8z" />
          </svg>
        </TaskBtn>
        <TaskBtn $w={49}>
          <svg width="24" height="21" viewBox="0 0 24 21" fill="#fff">
            <path d="M6 0 12 4 6 8 0 4zM18 0l6 4-6 4-6-4zM6 8l6 4-6 4-6-4zM18 8l6 4-6 4-6-4zM12 13l6 4-6 4-6-4z" />
          </svg>
        </TaskBtn>
        <TaskBtn $w={49} $bar>
          <svg width="23" height="23" viewBox="0 0 24 24">
            <circle cx="12" cy="12" r="12" fill="#db4437" />
            <path d="M12 24 18.500 12h-13L1.600 6.200A12 12 0 0 0 12 24z" fill="#0f9d58" />
            <path d="M12 24A12 12 0 0 0 24 12c0-1.500-.3-3-.8-4H12l6.500 5z" fill="#ffcd40" />
            <circle cx="12" cy="12" r="5.500" fill="#fff" />
            <circle cx="12" cy="12" r="4.300" fill="#4285f4" />
          </svg>
        </TaskBtn>
        <TaskBtn $w={49} $bar><VlcCone s={22} /></TaskBtn>
        <TaskBtn $w={49} $on $bar><NotepadIcon s={24} /></TaskBtn>
        <Tray>
          <TrayIcon $w={150}>
            <span />
          </TrayIcon>
          <TrayIcon $w={32}>
            <svg width="22" height="22" viewBox="0 0 22 22">
              <circle cx="11" cy="11" r="10" fill="#0f8ee0" stroke="#fff" strokeWidth="1.600" />
              <text x="11" y="16" textAnchor="middle" fontFamily="Liberation Sans, sans-serif" fontWeight="700" fontSize="14" fill="#fff">?</text>
            </svg>
          </TrayIcon>
          <TrayIcon $w={22}>
            <svg width="14" height="8"><path d="M1 7 7 1l6 6" fill="none" stroke="#eee" strokeWidth="1.200" /></svg>
          </TrayIcon>
          <TrayIcon $w={25}>
            <svg width="14" height="16" viewBox="0 0 14 16" fill="none" stroke="#eee">
              <rect x="1" y="4.500" width="8" height="7" rx="1" />
              <path d="M9 7l4-2v6l-4-2M3 1.500h5M3 14.500h5" />
            </svg>
          </TrayIcon>
          <TrayIcon $w={24}>
            <svg width="18" height="16" viewBox="0 0 18 16">
              <path d="M1 3 15 1v11H1z" fill="none" stroke="#eee" />
              <path d="M5 9l3-3M8 9h2" stroke="#eee" />
              <circle cx="14" cy="13" r="3" fill="#f7931e" />
            </svg>
          </TrayIcon>
          <TrayIcon $w={24}>
            <svg width="17" height="12" viewBox="0 0 17 12" fill="none" stroke="#eee">
              <rect x="6" y="2.500" width="10" height="7" />
              <path d="M1 2v3h3V2M2.500 5v3M4 6h2" />
            </svg>
          </TrayIcon>
          <TrayIcon $w={26}>
            <svg width="16" height="15" viewBox="0 0 16 15" fill="none" stroke="#aaa">
              <path d="M1 14A13 13 0 0 1 14 1M4 14A10 10 0 0 1 14 4M7 14a7 7 0 0 1 7-7" />
              <circle cx="12.500" cy="12.500" r="1.500" fill="#eee" stroke="none" />
            </svg>
          </TrayIcon>
          <TrayIcon $w={19}>
            <svg width="16" height="14" viewBox="0 0 16 14" fill="none" stroke="#eee">
              <path d="M1 5h3l4-3.500v11L4 9H1zM10 5q1.500 2 0 4M12.500 3q2.500 4 0 8" />
            </svg>
          </TrayIcon>
          <Lang>ENG</Lang>
          <Clock>
            <div>07:52 AM</div>
            <div>21-03-2021</div>
          </Clock>
          <Notif>
            <svg width="17" height="14" viewBox="0 0 18 16">
              <path d="M0 0h16v12H0z" fill="#fff" />
              <path d="M3 3h10M3 6h10M3 9h7" stroke="#3c3c3c" />
            </svg>
            <NotifCount>20</NotifCount>
          </Notif>
        </Tray>
      </Taskbar>
    </Desktop>
  )
}
